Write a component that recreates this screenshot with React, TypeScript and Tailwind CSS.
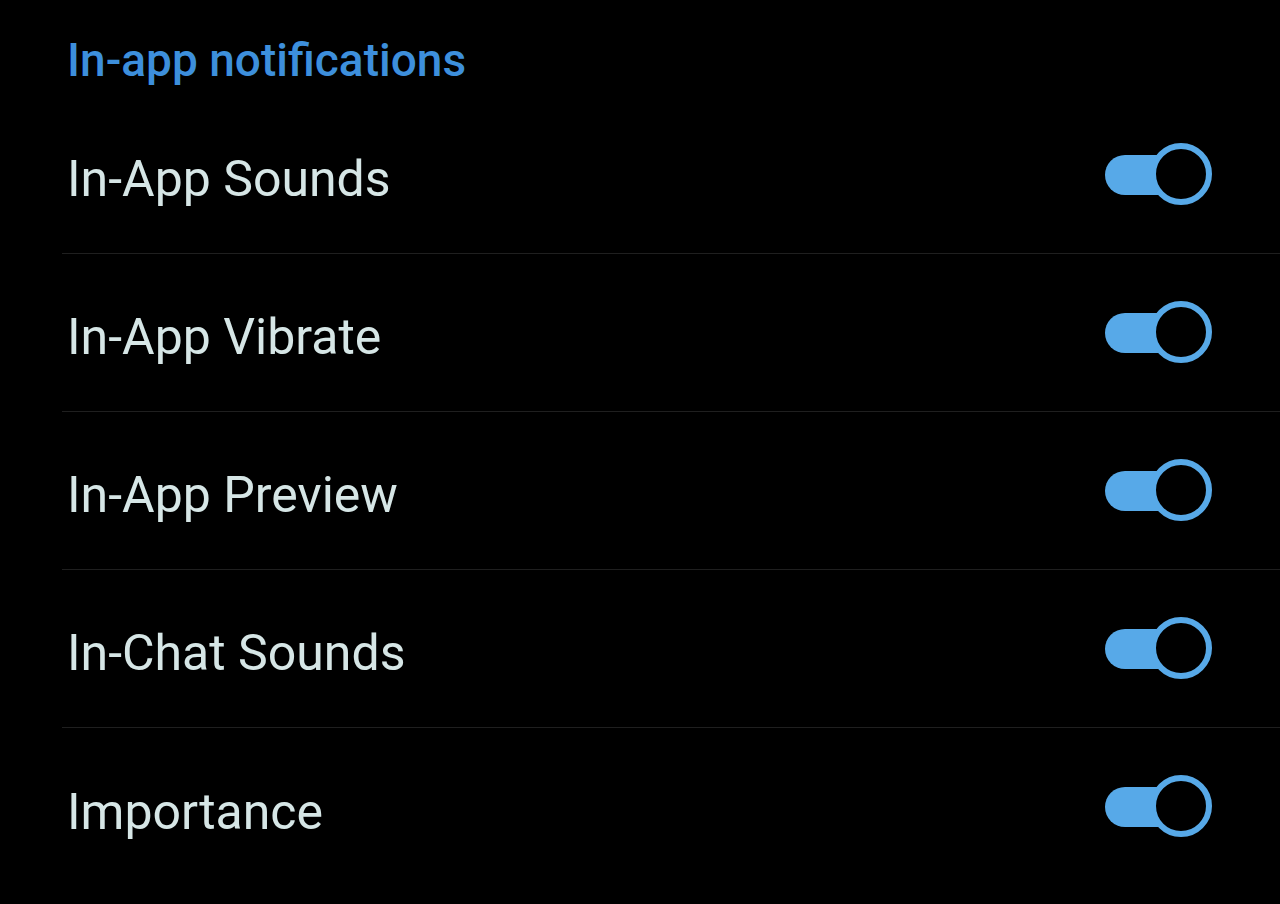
const items = ["In-App Sounds", "In-App Vibrate", "In-App Preview", "In-Chat Sounds", "Importance"];

function Toggle() {
  return (
    <div className="relative w-[108px] h-[64px] flex items-center">
      <div className="ml-[1px] w-[80px] h-[40px] rounded-full bg-[#57a9e8]" />
      <div className="absolute right-0 top-0 w-[62px] h-[62px] rounded-full border-[6px] border-[#57a9e8] bg-black" />
    </div>
  );
}

export default function App() {
  return (
    <div className="w-[1280px] h-[904px] bg-black overflow-hidden" style={{ fontFamily: "Roboto, sans-serif" }}>
      <div className="h-[96px] pl-[67px] pt-[33px]">
        <h2 className="text-[46px] leading-[54px] font-medium text-[#3d8fdc]">In-app notifications</h2>
      </div>
      <div className="ml-[62px]">
        {items.map((label, i) => (
          <div
            key={label}
            className={`h-[158px] flex items-center justify-between pl-[5px] pr-[68px] ${i < items.length - 1 ? "border-b border-[#1f1f1f]" : ""}`}
          >
            <span className="pt-[10px] text-[50px] text-[#d6e6e6]">{label}</span>
            <Toggle />
          </div>
        ))}
      </div>
    </div>
  );
}
